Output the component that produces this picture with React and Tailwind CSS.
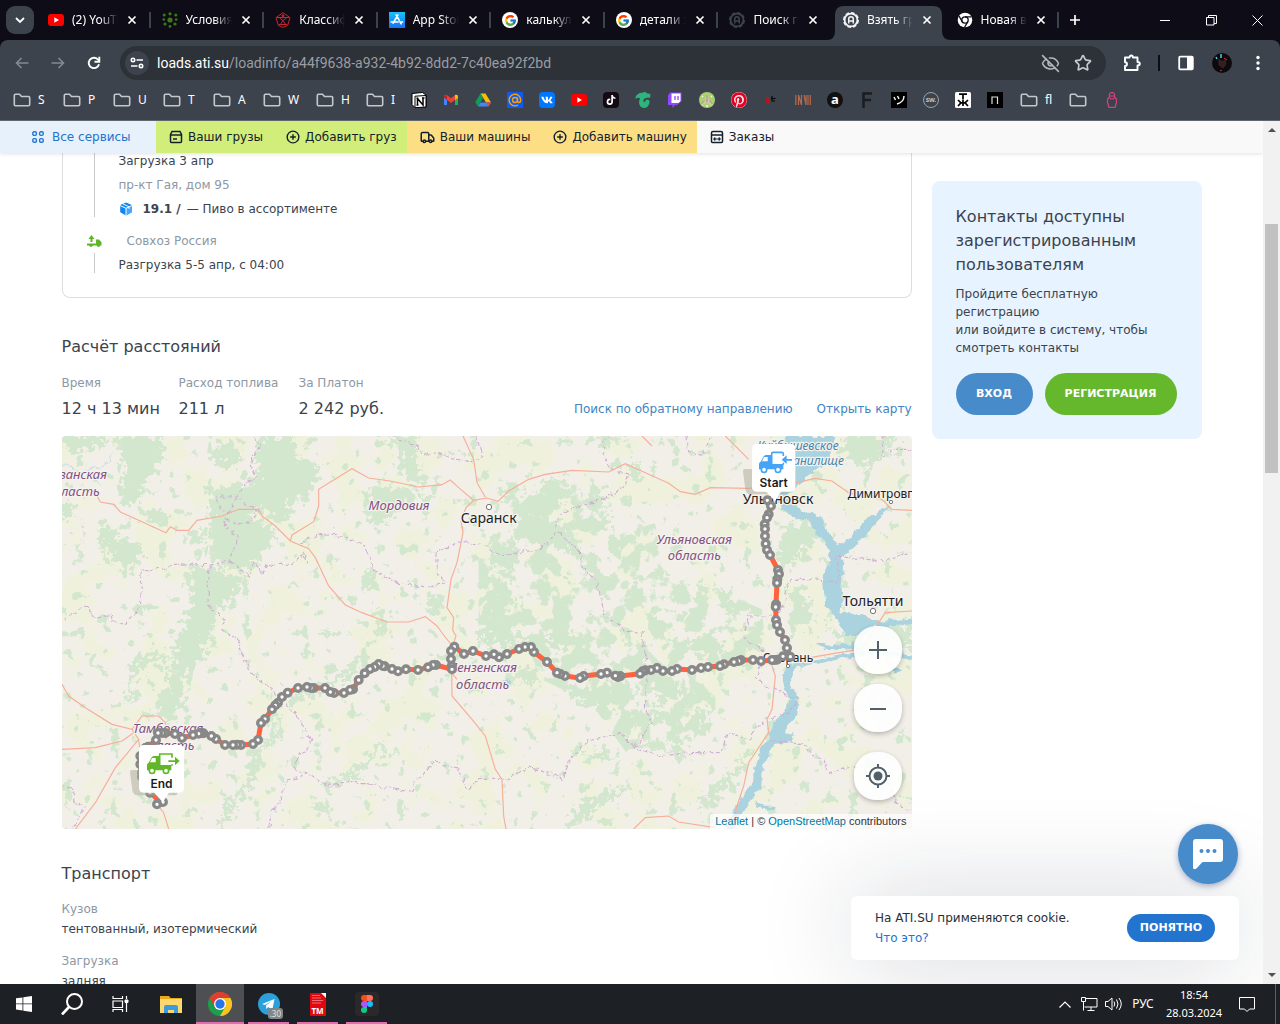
import React from "react";
import { FcGoogle } from "react-icons/fc";
import { FaTiktok, FaVk, FaPinterest } from "react-icons/fa";
import { Star, EyeOff, Truck, CirclePlus } from "lucide-react";

/* ---------- browser icons ---------- */
const YouTube = () => (
  <svg width="16" height="16" viewBox="0 0 16 16"><rect y="2" width="16" height="12" rx="3" fill="#f00" /><path d="M6.3 5.3v5.4L11 8z" fill="#fff" /></svg>
);
const Dots = () => (
  <svg width="16" height="16" viewBox="0 0 16 16" fill="#3d7a16">
    <circle cx="8" cy="8" r="2.6" /><circle cx="8" cy="1.8" r="1.6" /><circle cx="8" cy="14.4" r="1.4" />
    <circle cx="2.2" cy="3" r="1.5" /><circle cx="13.8" cy="3" r="1.5" /><circle cx="1.8" cy="7.5" r="1.3" />
    <circle cx="14.2" cy="7.5" r="1.3" /><circle cx="3" cy="12" r="1.6" /><circle cx="13" cy="12" r="1.6" />
  </svg>
);
const RedSeal = () => (
  <svg width="16" height="16" viewBox="0 0 16 16" fill="none" stroke="#c3282d" strokeWidth="1"><path d="M8 .7 15 5.6l-2.3 7.8L8 15.4l-4.7-2L1 5.6zM2 5.500h12M4 12.500h8M5.500 12.500 8 8.500l2.500 4M4.500 6 8 8.500 11.500 6" /><circle cx="8" cy="3.800" r="1" fill="#c3282d" /></svg>
);
const AppStore = () => (
  <span className="flex size-4 items-center justify-center bg-linear-to-b from-[#1fc1fb] to-[#1d6ff2] text-white">
    <svg width="14" height="14" viewBox="0 0 14 14" stroke="#fff" strokeWidth="1.6" strokeLinecap="round"><path d="M7.8 2 3.2 10.2M6.2 2l3 5.2M10 8.8l1.2 2M1.2 9h7M11 9h1.6" /></svg>
  </span>
);
const GoogleDisc = () => <span className="flex size-4 items-center justify-center rounded-full bg-white"><FcGoogle size={13} /></span>;
const AtiLogo = ({ color }) => (
  <svg width="16" height="16" viewBox="0 0 16 16" fill="none" stroke={color}>
    <circle cx="8" cy="8" r="6.400" strokeWidth="1.800" /><circle cx="8" cy="8" r="7.300" strokeWidth="1.400" strokeDasharray="3.700 2" />
    <path d="M5.700 11.500V7a2.300 2.300 0 0 1 4.600 0v4.500M5.700 9h4.600" strokeWidth="1.500" />
  </svg>
);
const ChromeMono = () => (
  <svg width="16" height="16" viewBox="0 0 16 16"><circle cx="8" cy="8" r="7.3" fill="#fff" /><circle cx="8" cy="8" r="3.2" fill="#fff" stroke="#0d0c17" strokeWidth="1.3" /><path d="M8 4.8h6.5M5.2 9.6 2 4M10.8 9.6 7.6 15.2" stroke="#0d0c17" strokeWidth="1.3" /></svg>
);
const Close = () => <svg width="10" height="10" viewBox="0 0 10 10" stroke="#fff" strokeWidth="1.7"><path d="m1.5 1.5 7 7m0-7-7 7" /></svg>;
const Folder = () => (
  <svg width="18" height="14" viewBox="0 0 18 14" fill="none" stroke="#c6c7ca" strokeWidth="1.6" strokeLinejoin="round"><path d="M1.3 11.5v-9q0-1.2 1.2-1.2h4l2 2.2h7q1.2 0 1.2 1.2v6.8q0 1.2-1.2 1.2h-13q-1.2 0-1.2-1.2z" /></svg>
);

const tabs = [
  { t: "(2) YouTube", i: <YouTube /> },
  { t: "Условия", i: <Dots /> },
  { t: "Классификатор", i: <RedSeal /> },
  { t: "App Store", i: <AppStore /> },
  { t: "калькулятор", i: <GoogleDisc /> },
  { t: "детали заказа", i: <GoogleDisc /> },
  { t: "Поиск грузов", i: <AtiLogo color="#3c444c" /> },
  { t: "Взять груз", i: <AtiLogo color="#f2f3f4" />, active: true },
  { t: "Новая вкладка", i: <ChromeMono /> },
];

function TabStrip() {
  return (
    <div className="flex h-10 bg-[#0d0c17]">
      <div className="w-[37px] shrink-0 pt-[6px] pl-[6px]">
        <button aria-label="Поиск вкладок" className="flex size-7 items-center justify-center rounded-[9px] bg-[#3d434d]">
          <svg width="10" height="7" viewBox="0 0 10 7" fill="none" stroke="#fff" strokeWidth="1.8"><path d="m1 1 4 4 4-4" /></svg>
        </button>
      </div>
      <div className="flex min-w-0 flex-1">
        {tabs.map((tab, n) => (
          <div key={n} className="relative min-w-0 flex-1 pt-[6px] pl-[3px]">
            {tab.active && (
              <svg className="absolute -left-[5px] top-[6px]" width="124" height="34" viewBox="0 0 124 34" fill="#3d434d"><path d="M0 34q8 0 8-9V9q0-9 9-9h89q9 0 9 9v16q0 9 9 9z" /></svg>
            )}
            <div className="relative flex h-7 items-center pl-2">
              {tab.i}
              <span className="ml-2 w-[46px] overflow-hidden text-[12px] whitespace-nowrap text-white [mask-image:linear-gradient(to_right,black_60%,transparent)]">{tab.t}</span>
              <button aria-label="Закрыть вкладку" className="ml-[9px]"><Close /></button>
              {n !== 6 && n !== 7 && <span className="absolute right-0 h-4 w-[2px] bg-[#3d434d]" />}
            </div>
          </div>
        ))}
      </div>
      <button aria-label="Новая вкладка" className="flex w-8 items-center justify-center">
        <svg width="12" height="12" viewBox="0 0 12 12" stroke="#fff" strokeWidth="1.7"><path d="M6 1v10M1 6h10" /></svg>
      </button>
      <div className="w-[51px]" />
      <button aria-label="Свернуть" className="flex w-[46px] items-center justify-center"><svg width="10" height="10" stroke="#fff"><path d="M0 5.5h10" /></svg></button>
      <button aria-label="Развернуть" className="flex w-[46px] items-center justify-center"><svg width="11" height="11" fill="none" stroke="#fff"><path d="M.5 2.5h7.500v7.500H.5zM2.500 2.500V.5h8v8H8" /></svg></button>
      <button aria-label="Закрыть" className="flex w-[46px] items-center justify-center"><svg width="11" height="11" stroke="#fff"><path d="m.5.5 10 10m0-10-10 10" /></svg></button>
    </div>
  );
}

const navBtn = "flex w-9 items-center justify-center";
function Toolbar() {
  return (
    <div className="bg-[#0d0c17]">
      <div className="flex h-[46px] items-center rounded-t-lg bg-[#3d434d] pl-1">
        <button aria-label="Назад" className={navBtn}><svg width="14" height="12" viewBox="0 0 14 12" fill="none" stroke="#858991" strokeWidth="1.6"><path d="M13.500 6H1.500M6.500 1l-5 5 5 5" /></svg></button>
        <button aria-label="Вперёд" className={navBtn}><svg width="14" height="12" viewBox="0 0 14 12" fill="none" stroke="#858991" strokeWidth="1.6"><path d="M.5 6h12M7.500 1l5 5-5 5" /></svg></button>
        <button aria-label="Обновить" className={navBtn}><svg width="14" height="14" viewBox="0 0 14 14" fill="none" stroke="#fff" strokeWidth="1.9"><path d="M12 8.200A5.200 5.200 0 1 1 10.800 3.400L12.500 5" /><path d="M12.300.8v5H7.500" /></svg></button>
        <div className="ml-2 flex h-[34px] min-w-0 flex-1 items-center rounded-full bg-[#2d3138] pr-[14px] pl-[5px]">
          <span className="flex size-6 shrink-0 items-center justify-center rounded-full bg-[#3d434d]">
            <svg width="14" height="12" viewBox="0 0 14 12" fill="none" stroke="#fff" strokeWidth="1.6"><circle cx="3" cy="3" r="1.700" /><path d="M6.500 3H13M1 9h6.500" /><circle cx="11" cy="9" r="1.700" /></svg>
          </span>
          <div className="relative ml-2 flex-1 font-['Roboto'] text-[14px] text-[#9a9da3]">
            <input aria-label="Адрес" className="absolute inset-0 w-full bg-transparent text-transparent outline-none" />
            <span className="text-white">loads.ati.su</span>/loadinfo/a44f9638-a932-4b92-8dd2-7c40ea92f2bd
          </div>
          <button aria-label="Файлы cookie"><EyeOff size={19} color="#b5b7ba" strokeWidth={2} /></button>
          <button aria-label="В закладки" className="ml-[14px]"><Star size={18} color="#c9cacc" strokeWidth={2.200} /></button>
        </div>
        <button aria-label="Расширения" className="ml-[17px]"><svg width="18" height="18" viewBox="0 0 18 18" fill="none" stroke="#fff" strokeWidth="1.900" strokeLinejoin="round"><path d="M2 3.500h4.500q0-2 1.700-2t1.700 2h4.600V8q2.300 0 2.300 1.700t-2.300 1.700V16H2v-4q2 0 2-1.900T2 8.200z" /></svg></button>
        <span className="ml-[17px] h-4 w-[2px] bg-[#0d0c17]" />
        <button aria-label="Боковая панель" className="ml-[18px]"><svg width="16" height="16" viewBox="0 0 16 16"><rect x="1.200" y="1.700" width="13.600" height="12.600" rx="1" fill="none" stroke="#fff" strokeWidth="1.800" /><path d="M9 2h5.500v12H9z" fill="#fff" /></svg></button>
        <button aria-label="Профиль" className="ml-[18px]"><svg width="20" height="20" viewBox="0 0 20 20"><circle cx="10" cy="10" r="10" fill="#0c0a0c" /><path d="m7 6 3 3 3-2 1 4-3 4-4-3z" fill="#2b2226" stroke="#4a1d23" /><path d="m4 4 1 2M9 1v4" stroke="#51c8ec" strokeWidth="1.500" /><path d="m12 5 3 2M8 18l2-1" stroke="#c3343b" /></svg></button>
        <button aria-label="Меню" className="mr-[15px] ml-[19px] w-[14px]"><svg className="mx-auto" width="4" height="16" fill="#fff"><circle cx="2" cy="2.500" r="1.700" /><circle cx="2" cy="8" r="1.700" /><circle cx="2" cy="13.500" r="1.700" /></svg></button>
      </div>
    </div>
  );
}

const marks = [
  <svg width="16" height="16" viewBox="0 0 16 16"><path d="M1 1.500 11.500.5 15 3v12l-11 .7L1 12.500z" fill="#fff" stroke="#000" /><path d="M4 4.200 15 3.500v11.500l-11 .7z" fill="#fff" stroke="#000" /><path d="M6.500 13V6.500L12 13V6M5.500 6.500h2M5.500 13h2M11 6h2.500" stroke="#000" strokeWidth="1.500" fill="none" /></svg>,
  <svg width="16" height="16" viewBox="0 0 16 16"><path d="M1 3.500V13h3V7.500" fill="#4285f4" /><path d="M15 3.500V13h-3V7.500" fill="#34a853" /><path d="M1 4.500V4q1-2 3-1l4 3.300L12 3q2-1 3 1v1.500L8 11 1 5.500z" fill="#ea4335" /><path d="M12 3q3-1 3 2v1l-3 2z" fill="#fbbc04" /><path d="M4 8v0L1 5.500V4l3-1z" fill="#c5221f" /></svg>,
  <svg width="16" height="16" viewBox="0 0 16 16"><path d="M5.500 1.500h5L16 10.500h-5z" fill="#fbbc04" /><path d="M5.500 1.500 8 6 3 14.500.3 10.300z" fill="#0f9d58" /><path d="M5.500 10.500H16l-2.500 4H3z" fill="#4285f4" /><path d="M11 10.500h5l-2.500 4z" fill="#ea4335" /></svg>,
  <svg width="16" height="16" viewBox="0 0 16 16"><rect width="16" height="16" rx="1" fill="#0a5cf5" /><path d="M11 13a5.800 5.800 0 1 1 2.700-5q0 2.500-1.700 2.500T10.500 8V5.500" fill="none" stroke="#ff9e00" strokeWidth="1.400" /><circle cx="8" cy="8" r="2.500" fill="none" stroke="#ff9e00" strokeWidth="1.400" /></svg>,
  <span className="flex size-4 items-center justify-center rounded-[4px] bg-[#07f] text-white"><FaVk size={12} /></span>,
  <YouTube />,
  <span className="flex size-4 items-center justify-center rounded-[4px] bg-[#150a14] text-white"><FaTiktok size={10} /></span>,
  <svg width="16" height="16" viewBox="0 0 16 16" fill="#2cb67d"><path d="M4 1.500Q5 .5 7 1q3-2 5 .5 2-.5 3.500 1L15 6q-2-1-4 0-3 .5-2.500 3 .5 2 1.500 1 0-2 2-2.500 3 0 2.500 3.500Q13 16 9 16q-5-.5-5-6l1-4Q2 5 .5 7 0 3.500 4 1.500z" /></svg>,
  <svg width="16" height="16" viewBox="0 0 16 16"><path d="M3 .5h11.500v9L10 13H8l-2.500 3V13H1V3.500z" fill="#9146ff" /><path d="M4.500 1.500h9V9l-2 2h-7z" fill="#fff" /><path d="M8 4v4m3-4v4" stroke="#9146ff" strokeWidth="1.300" /></svg>,
  <svg width="16" height="16" viewBox="0 0 16 16"><circle cx="8" cy="8" r="8" fill="#a9d06f" /><path d="m1.500 12 4-4L7 3q1-1.500 2 0l1.500 5 4 4-2 2.500L8 10l-4.500 4.500z" fill="#d3c6a6" /><path d="M8 3v7M5.500 8.500 2.500 12M10.500 8.500l3 3.500" stroke="#8d8868" strokeWidth=".8" /><path d="m3 4 1 1M12 4l1 1M8 13v2" stroke="#f6fae8" strokeWidth="1.500" /></svg>,
  <span className="flex size-4 items-center justify-center rounded-full bg-[#f8e6e8] text-[#e60023]"><FaPinterest size={16} /></span>,
  <svg width="16" height="16" viewBox="0 0 16 16" fill="none"><path d="M6 5.500H3v3h3V5.500V11H3" stroke="#d10d12" strokeWidth="1.200" /><path d="M9 4v5h3M8 6.500h4.500" stroke="#050505" strokeWidth="1.200" /></svg>,
  <svg width="16" height="16" viewBox="0 0 16 16" fill="none" stroke="#b8694b" strokeWidth="1.200"><path d="M.8 3v10M3.500 13V3l3 10V3M9 3l2 10V3M13 3v10M15.300 3v10" /></svg>,
  <span className="flex size-4 items-center justify-center rounded-full bg-[#111] pb-[2px] text-[13px] leading-none font-bold text-white">a</span>,
  <svg width="16" height="16" viewBox="0 0 16 16" stroke="#1b1c20" strokeWidth="2.500" fill="none"><path d="M4.500 16V1.500H13M4.500 8H12" /></svg>,
  <svg width="16" height="16" viewBox="0 0 16 16"><path d="M0 0h16v16H0z" /><path d="m3 5 1.500 3M6.500 4 8 7M13 4q0 6-7 8" stroke="#fff" strokeWidth="1.400" fill="none" /></svg>,
  <span className="flex size-4 items-center justify-center rounded-full border border-[#9ba1ab] text-[6px] font-bold text-[#c7cbd1]">SW.</span>,
  <svg width="16" height="16" viewBox="0 0 16 16"><rect width="16" height="16" rx="1.500" fill="#fff" /><path d="M4 2.200h8M8 2v5M8 7.500v6.500M3 8l3 2.800L3 14M13 8l-3 2.800 3 3.200M5.500 10.800h5" stroke="#000" strokeWidth="1.700" fill="none" /></svg>,
  <svg width="16" height="16" viewBox="0 0 16 16"><path d="M0 0h16v16H0z" /><path d="M5 12V5h5.500v7" stroke="#ddd" strokeWidth="1.200" fill="none" /></svg>,
];

function Bookmarks() {
  return (
    <div className="flex h-[35px] items-center border-b border-[#60666e] bg-[#3d434d] pb-[6px] pl-[13px] text-[12px] text-white">
      {["S", "P", "U", "T", "A", "W", "H", "I"].map((l) => (
        <button key={l} className={l === "W" ? "flex w-[53px] items-center gap-[7px]" : l === "I" ? "flex w-[45px] items-center gap-[7px]" : "flex w-[50px] items-center gap-[7px]"}><Folder />{l}</button>
      ))}
      <div className="flex gap-4">
        {marks.map((m, i) => <button key={i} aria-label={"Закладка " + (i + 1)}>{m}</button>)}
      </div>
      <button className="ml-[17px] flex w-[49px] items-center gap-[7px]"><Folder />fl</button>
      <button aria-label="Папка"><Folder /></button>
      <button aria-label="Матрёшка" className="ml-[17px]"><svg width="16" height="16" viewBox="0 0 16 16" fill="none" stroke="#d3417c" strokeWidth="1.200"><path d="M5.500 5q-.8-4.300 2.500-4.300T10.500 5q2.500 1.500 2 5.500L11 15.300H5L3.500 10.500Q3 6.500 5.500 5zM5.500 4h5M5.500 6q2.500 2 5 0" /></svg></button>
    </div>
  );
}

/* ---------- site header ---------- */
const BoxIcon = () => <svg width="14" height="14" viewBox="0 0 14 14" fill="none" stroke="#14202b" strokeWidth="1.500"><path d="M1.500 4.500 3 1.500h8l1.500 3v7q0 1-1 1h-9q-1 0-1-1zM1.500 5h11M4 9h4" /></svg>;
const OrdersIcon = () => <svg width="14" height="14" viewBox="0 0 14 14" fill="none" stroke="#14202b" strokeWidth="1.500"><path d="M1.500 5V3q0-1.500 1.500-1.500h8q1.500 0 1.500 1.500v8.500q0 1-1 1h-9q-1 0-1-1V5h11" /><path d="M4 9h6M5.300 7.500 3.800 9l1.500 1.500M8.700 7.500 10.200 9l-1.500 1.500" strokeWidth="1.100" /></svg>;
const navLink = "flex items-center gap-[5px] pl-[13px] pr-[10px]";

function SiteNav() {
  return (
    <nav className="relative z-10 flex h-8 bg-[#f9f9f9] text-[12px] text-[#14202b] shadow-[0_1px_4px_rgba(0,0,0,0.12)]">
      <a href="#services" className="flex w-[156px] items-center gap-2 bg-[#e7f1fb] pl-8 text-[#2274cf]">
        <svg width="12" height="12" viewBox="0 0 12 12" fill="none" stroke="#2274cf" strokeWidth="1.400"><rect x=".8" y=".8" width="3.600" height="3.600" rx="1.300" /><rect x="7.600" y=".8" width="3.600" height="3.600" rx="1.300" /><rect x=".8" y="7.600" width="3.600" height="3.600" rx="1.300" /><rect x="7.600" y="7.600" width="3.600" height="3.600" rx="1.300" /></svg>
        Все сервисы
      </a>
      <div className="flex bg-[#d2ee7a]">
        <a href="#loads" className={navLink}><BoxIcon />Ваши грузы</a>
        <a href="#add-load" className={navLink}><CirclePlus size={14} strokeWidth={2.400} />Добавить груз</a>
      </div>
      <div className="flex bg-[#fcdf85]">
        <a href="#trucks" className={navLink}><Truck size={15} strokeWidth={2.400} />Ваши машины</a>
        <a href="#add-truck" className={navLink}><CirclePlus size={14} strokeWidth={2.400} />Добавить машину</a>
      </div>
      <a href="#orders" className={navLink}><OrdersIcon />Заказы</a>
    </nav>
  );
}

/* ---------- map: 3 drawing units per pixel ---------- */
const forests = [
  "0,0 150,0 130,25 60,45 0,35", "165,0 310,0 300,60 275,110 245,140 235,200 200,205 170,170 185,110 175,60", "470,15 530,30 530,70 510,100 470,90 450,60",
  "600,0 700,0 700,60 760,70 765,110 730,185 690,180 685,240 650,260 610,240 570,190 585,120 580,50", "440,180 480,150 560,140 590,120 600,180 560,240 600,260 640,280 630,320 590,370 560,400 500,395 450,370 440,310 450,240",
  "0,205 40,210 30,240 0,260", "240,240 290,215 320,235 310,270 260,265", "120,270 160,275 180,310 240,330 235,365 200,400 150,360 115,300", "380,290 430,280 430,320 400,330",
  "385,395 450,390 540,430 530,470 490,500 460,540 450,600 380,600 385,520 390,450", "985,0 1070,0 1065,90 1100,130 1080,145 1020,120 1010,50", "910,160 960,150 1050,160 1060,190 1000,230 960,270 920,260 910,200", "1080,170 1120,180 1110,205 1080,205",
  "900,420 940,390 950,430 920,470 890,450", "1090,490 1150,480 1130,540 1100,530", "1260,540 1290,520 1290,600 1250,600", "940,520 970,510 970,570 950,600",
  "350,582 430,582 425,660 395,690 370,720 365,790 330,860 290,850 290,790 320,740 335,660", "200,690 240,655 300,650 330,665 240,690 215,740 215,800 200,800", "560,930 580,930 590,1000 560,1060 510,1120 480,1179 470,1160 500,1100 560,1020",
  "640,800 660,840 640,920 570,950 640,890", "780,1040 860,1010 960,920 970,940 900,1010 800,1050", "760,1100 800,1085 800,1120 770,1130", "780,582 820,582 815,605 790,605", "940,582 980,582 970,605 950,605", "670,780 720,770 860,700 900,650 920,660 880,710 780,770 690,800",
  "1315,155 1370,130 1380,165 1350,185 1320,180", "1440,130 1490,125 1520,170 1510,200 1460,200 1420,170", "1560,190 1600,170 1640,210 1580,220", "1610,0 1680,0 1670,25 1630,30", "1700,80 1730,80 1740,140 1710,130",
  "1380,220 1440,230 1490,270 1540,300 1550,350 1500,340 1450,330 1400,320 1360,260", "1290,330 1360,310 1380,370 1340,400 1290,390", "1600,250 1640,235 1650,275 1610,285",
  "1300,430 1330,440 1350,500 1320,560 1270,570 1270,500", "1950,430 1980,460 2030,520 2000,540", "2160,270 2250,260 2290,310 2230,330 2180,400 2150,360",
  "2340,0 2500,0 2470,60 2400,90 2350,60", "2180,440 2220,470 2260,540 2250,582 2190,560", "2290,560 2340,590 2440,600 2440,582 2550,560 2550,640 2350,640", "1260,590 1420,600 1550,600 1550,630 1480,640 1360,620 1270,640",
  "1500,740 1560,760 1700,730 1720,790 1660,820 1590,810 1540,790", "1760,760 1800,730 1870,740 1850,790 1790,790", "1880,820 1920,820 1930,890 1900,910 1870,880", "1760,820 1810,830 1820,860 1770,870", "1560,950 1640,940 1660,970 1600,970",
  "1820,930 1860,920 1880,960 1830,970", "1520,1140 1580,1090 1700,1045 1700,1060 1600,1120 1560,1160", "1910,1100 1950,1060 2040,970 2050,990 1980,1070 1930,1130", "1860,610 1960,600 1990,640 1900,660", "1350,710 1420,690 1430,730 1370,740",
];
const thickets = "1250,380 1330,220 1440,120 1560,150 1660,300 1780,260 1800,420 1960,460 2100,520 2110,640 1960,700 1960,820 1850,930 1700,960 1600,820 1500,760 1250,640";
const trunkRoads = [
  "105,180 115,198 155,205 175,228 235,255 312,290 325,272 345,283 380,283 405,253 480,240 530,220 590,220 600,240 640,270 685,315 740,338 760,365 800,450 850,507 900,530 975,558 1040,558 1090,542 1125,570 1147,600 1180,640",
  "685,315 690,297 755,257 770,210 770,160 870,98 920,126 985,135 1070,153 1140,146 1165,132 1190,155 1235,193 1275,186 1308,196 1340,165 1400,130 1450,115 1530,103 1640,108 1690,83 1760,115 1820,142 1855,167 1900,175 1945,155 2060,157 2190,143 2260,127 2310,135 2360,170 2400,180 2460,190 2490,220 2550,223",
  "1203,0 1235,70 1245,140 1270,184", "1235,193 1212,215 1197,255 1203,290 1185,380 1167,430 1155,515 1175,545 1172,582 1182,600 1168,640 1170,780 1230,850 1270,900 1300,1000 1320,1030 1325,1140 1332,1179",
  "1990,0 2060,70", "1740,0 1770,30", "0,745 20,780 70,815 150,865 210,880 240,840 290,840 310,860 312,910", "0,940 100,935 180,915 230,880", "230,910 160,995 100,1100 40,1179", "210,880 230,910 240,1000 285,1105 305,1130 320,1179",
  "2127,680 2140,720 2130,820 2115,850 2120,890 2060,980 2045,1050 2025,1110 2010,1179", "2245,665 2330,650 2400,640 2450,560 2470,530 2550,525", "1715,1179 1750,1145 1820,1140 1850,1158 1960,1175", "1160,700 1185,730",
];
const borders = [
  "578,0 595,30 570,60 565,90 583,125 555,140 525,180 460,180 475,225 500,230 520,185 590,225 560,265 490,250 490,270 533,305 510,350 505,375 445,385 340,388 300,400 240,405 235,515 185,565 150,555 145,535 95,545 70,507 5,550",
  "445,385 435,440 445,520 490,550 480,582 525,610 560,700 640,770 700,830 750,910 735,945 705,960 700,1000 735,1010 800,1050 860,1040 920,1040 1000,1060 1050,1070 1065,1035 1120,975 1190,1000 1215,1060 1254,1030 1330,1030 1400,990 1500,1030 1530,960 1580,915 1670,890 1720,935 1790,960 1880,950 1975,950 2000,890 2060,910 2110,850 2180,830 2210,790 2150,770 2080,730 2110,650 2040,600",
  "505,375 560,420 575,380 600,415 620,385 690,385 725,350 735,385 M715,320 770,295 830,300 910,325 935,400 990,435 1090,455 1150,440 1125,400 1125,350 1190,318 1260,325 1315,360 1430,340 1480,300 1490,240 1560,205 1620,195 1690,150 1700,115 1640,95 1620,30 1640,0",
  "1490,290 1550,340 1560,390 1600,430 1630,540 1690,582 1740,590 1755,700 1750,820 1770,860 1720,930", "985,0 1060,30 1085,55 1130,50 1170,65 1230,80 1265,60 1240,0", "1875,0 1880,50 1920,60 1950,0", "2050,582 2060,540 2150,540 2185,430 2220,430 2330,437 2325,360 2410,370 2470,375 2550,350",
  "0,1050 30,1060 40,1100 70,1110 30,1179", "620,1179 630,1120 655,1100 670,1040 740,1010", "2130,910 2240,930 2250,960 2285,970 2300,1010 2380,990 2420,990 2480,1040 2500,1100 2540,1120", "2470,0 2460,60 2500,40 2550,40",
];
const stops = [[2116,193],[2127,210],[2120,235],[2115,245],[2108,265],[2109,279],[2109,300],[2111,323],[2115,342],[2124,357],[2148,402],[2151,414],[2146,430],[2145,441],[2142,505],[2141,513],[2142,552],[2145,567],[2154,588],[2169,612],[2175,636],[2185,662],[2163,661],[2145,671],[2137,672],[2130,672],[2097,675],[2073,672],[2037,672],[2030,675],[2016,678],[1986,685],[1974,690],[1938,693],[1917,696],[1890,702],[1845,699],[1830,705],[1803,705],[1785,696],[1767,702],[1750,703],[1742,706],[1734,713],[1675,720],[1668,723],[1660,719],[1635,710],[1617,714],[1565,720],[1554,726],[1509,720],[1495,714],[1485,710],[1455,678],[1416,648],[1407,633],[1389,633],[1371,639],[1335,654],[1311,664],[1296,655],[1272,660],[1233,645],[1206,654],[1177,632],[1167,645],[1167,669],[1169,690],[1170,700],[1122,687],[1113,687],[1098,694],[1068,702],[1032,700],[1008,706],[990,699],[968,691],[963,690],[950,684],[938,693],[924,699],[908,712],[890,732],[873,760],[864,762],[846,771],[816,771],[805,768],[789,756],[755,756],[747,756],[735,753],[708,756],[677,770],[660,783],[648,800],[640,808],[630,820],[609,849],[597,861],[588,912],[573,924],[537,927],[525,926],[513,927],[489,927],[462,909],[448,900],[424,892],[418,890],[410,893],[393,897],[360,906],[339,894],[310,891],[300,891],[288,891],[282,912],[258,932],[250,936],[235,960],[235,985],[240,1010],[240,1022],[264,1070],[297,1098],[303,1098],[285,1105]];

function Pin({ x, y, w, color, label, out }) {
  return (
    <g transform={`translate(${x} ${y})`}>
      <path d={`M-27 81q0-6 6-6H${w - 20}V143q0 8-8 8H-5q-12 0-15-15z`} fill="#a9a994" opacity=".5" />
      <path d={`M14 0H${w - 14}q14 0 14 14v115q0 14-14 14H${w / 2 + 22}L${w / 2 + 4} 172 ${w / 2 - 22} 143H14Q0 143 0 129V14Q0 0 14 0z`} fill="#fff" />
      <g transform={out ? "translate(3 0)" : ""} fill={color}>
        <path d="M21 76V60q0-5 5-7l8-15q3-5 8-5h17v27h35v16z" />
        <path d="M36 39h11v13H30z" fill="#fff" />
        <path d={out ? "M59 60V27H96V38M96 58v4" : "M59 60V29q0-4 4-4h26q5 0 5 5v6M94 56v6"} fill="none" stroke={color} strokeWidth="5" />
        <circle cx="36" cy="77" r="8" fill="#fff" stroke={color} strokeWidth="5" /><circle cx="78" cy="77" r="8" fill="#fff" stroke={color} strokeWidth="5" />
        {out ? <path d="M85 46h20V35l14 13-14 13V51H85z" /> : <path d="M120 45h-16V34L89 47l15 13V50h16z" />}
      </g>
      <text x={w / 2} y="128" textAnchor="middle" fontSize="36" className="font-['Inter'] font-semibold" fill="#1c1c1c">{label}</text>
    </g>
  );
}

const region = "font-['Noto_Sans'] italic";
const halo = { stroke: "#f5f3ee", strokeWidth: 7, paintOrder: "stroke", strokeLinejoin: "round" };
const whole = { x: 0, y: 0, width: 2550, height: 1179, filterUnits: "userSpaceOnUse", colorInterpolationFilters: "sRGB" };

function RouteMap() {
  return (
    <div className="relative mt-[15px] h-[393px] overflow-hidden rounded-[4px] bg-[#f2efe9]">
      <svg className="h-full w-full" viewBox="0 0 2550 1179" preserveAspectRatio="xMidYMid slice" role="img" aria-label="Карта маршрута">
        <defs>
          <filter id="rag" {...whole}>
            <feTurbulence type="fractalNoise" baseFrequency="0.05" numOctaves="4" seed="4" result="n" />
            <feDisplacementMap in="SourceGraphic" in2="n" scale="80" xChannelSelector="R" yChannelSelector="G" />
          </filter>
          <filter id="thicket" {...whole}>
            <feTurbulence type="fractalNoise" baseFrequency="0.017" numOctaves="5" seed="9" />
            <feColorMatrix values="0 0 0 0 .827  0 0 0 0 .906  0 0 0 0 .808  20 0 0 0 -10" />
            <feComposite in2="SourceGraphic" operator="in" />
          </filter>
          <filter id="copse" {...whole}>
            <feTurbulence type="fractalNoise" baseFrequency="0.028" numOctaves="4" seed="33" />
            <feColorMatrix values="0 0 0 0 .827  0 0 0 0 .906  0 0 0 0 .808  20 0 0 0 -13" />
          </filter>
          <filter id="fields" {...whole}>
            <feTurbulence type="fractalNoise" baseFrequency="0.009" numOctaves="6" seed="21" />
            <feColorMatrix values="0 0 0 0 .941  0 0 0 0 .945  0 0 0 0 .866  10 0 0 0 -5" />
          </filter>
          <filter id="shore" {...whole}>
            <feTurbulence type="fractalNoise" baseFrequency="0.04" numOctaves="3" seed="2" result="n" />
            <feDisplacementMap in="SourceGraphic" in2="n" scale="22" xChannelSelector="R" yChannelSelector="G" />
          </filter>
        </defs>
        <rect width="2550" height="1179" filter="url(#fields)" />
        <rect width="2550" height="1179" filter="url(#copse)" />
        <polygon points={thickets} filter="url(#thicket)" />
        <g fill="#d3e7ce" filter="url(#rag)">{forests.map((p) => <polygon key={p} points={p} />)}</g>
        <g fill="#aad3df" stroke="#aad3df" filter="url(#shore)" strokeLinejoin="round">
          <path stroke="none" d="M2170 0H2320L2300 70 2250 110 2200 160 2140 200 2150 110z" />
          <path stroke="none" d="M2140 190 2180 190 2230 230 2275 240 2300 290 2325 328 2360 310 2410 250 2480 208 2450 255 2385 325 2345 365 2340 420 2345 500 2330 530 2390 530 2440 555 2550 548V565L2440 575 2400 600 2350 600 2320 540 2290 510 2283 430 2305 370 2300 340 2265 295 2240 255 2190 245 2160 220z" />
          <path fill="none" strokeWidth="12" d="M2550 665 2440 650 2340 660 2260 680 2190 690M2270 622 2300 635 2370 628 2400 645" />
          <path fill="none" strokeWidth="22" d="M2190 690 2172 720 2180 760 2200 790" />
          <path fill="none" strokeWidth="38" d="M2200 795 2190 820 2160 860 2140 905" />
          <path fill="none" strokeWidth="26" d="M2140 900 2105 950 2090 990 2085 1050 2050 1090 2020 1140 2000 1179M2140 910 2190 905" />
          <path fill="none" strokeWidth="12" d="M2080 1105 2140 1120M2490 690 2510 710M1320 740 1350 735" />
          <path fill="none" strokeWidth="2" d="M0 85 60 110 140 80 152 50M60 110 110 140" />
        </g>
        <g fill="none" stroke="#f8ae98" strokeWidth="3.500">{trunkRoads.map((p) => <polyline key={p} points={p} />)}</g>
        <g fill="none" stroke="#d0aed4" strokeWidth="3.500" strokeDasharray="13 7" filter="url(#shore)">{borders.map((p) => <path key={p} d={"M" + p} />)}</g>
        <g fill="#815183" fontSize="39" className={region} textAnchor="middle" {...halo}>
          <text x="64" y="130">занская</text><text x="55" y="180">ласть</text>
          <text x="1011" y="221">Мордовия</text>
          <text x="1897" y="323">Ульяновская</text><text x="1897" y="373">область</text>
          <text x="1262" y="708">Пензенская</text><text x="1262" y="758">область</text>
          <text x="318" y="892">Тамбовская</text><text x="318" y="942">область</text>
        </g>
        <g fill="#4a84ae" fontSize="36" className={region} textAnchor="middle" {...halo}>
          <text x="2208" y="43">Куйбышевское</text><text x="2212" y="87">водохранилище</text>
        </g>
        <g fill="#222" className="font-['Noto_Sans']" textAnchor="middle" {...halo}>
          <text x="1280" y="262" fontSize="42">Саранск</text>
          <text x="2148" y="204" fontSize="42">Ульяновск</text>
          <text x="2357" y="187" fontSize="36" textAnchor="start">Димитровград</text>
          <text x="2433" y="510" fontSize="42">Тольятти</text>
          <text x="2178" y="677" fontSize="36">Сызрань</text>
        </g>
        <g fill="#fff" stroke="#777" strokeWidth="3"><circle cx="1281" cy="213" r="8" /><circle cx="2433" cy="525" r="8" /><circle cx="2487" cy="198" r="5" /><circle cx="2178" cy="690" r="5" /></g>
        <polyline points={stops.map((s) => s.join()).join(" ")} fill="none" stroke="#ff6240" strokeWidth="15" strokeLinejoin="round" />
        <g fill="#fff" stroke="#888" strokeWidth="10">{stops.map(([x, y]) => <circle key={x + "-" + y} cx={x} cy={y} r="10" />)}</g>
        <Pin x={2070} y={24} w={130} color="#46a4f8" label="Start" />
        <Pin x={231} y={927} w={135} color="#62b728" label="End" out />
      </svg>
      <div className="absolute top-[190px] right-[10px] flex flex-col">
        <button aria-label="Увеличить" className={mapBtn}><svg width="18" height="18" stroke="#52606b" strokeWidth="2"><path d="M9 0v18M0 9h18" /></svg></button>
        <button aria-label="Уменьшить" className={mapBtn + " mt-[10px]"}><svg width="16" height="18" stroke="#52606b" strokeWidth="2"><path d="M0 10h16" /></svg></button>
        <button aria-label="Моё местоположение" className={mapBtn + " mt-5"}><svg width="24" height="24" viewBox="0 0 24 24" fill="none" stroke="#52606b" strokeWidth="2"><circle cx="12" cy="12" r="8.500" /><circle cx="12" cy="12" r="4.500" fill="#52606b" stroke="none" /><path d="M12 0v4M12 20v4M0 12h4M20 12h4" /></svg></button>
      </div>
      <div className="absolute right-0 bottom-0 bg-white/75 px-[5px] font-['Liberation_Sans'] text-[11px] leading-[15px] text-[#333]">
        <a href="#leaflet" className="text-[#0078a8]">Leaflet</a> | © <a href="#osm" className="text-[#0078a8]">OpenStreetMap</a> contributors
      </div>
    </div>
  );
}
const mapBtn = "flex size-12 items-center justify-center rounded-[22px] bg-white/90 shadow-[0_2px_5px_rgba(0,0,0,0.25)]";

/* ---------- page ---------- */
const Stat = ({ label, value }) => (
  <div className="whitespace-nowrap"><dt className="text-[12px] leading-5 text-[#8c98a4]">{label}</dt><dd className="mt-1 text-[16px] leading-6">{value}</dd></div>
);

function Page() {
  return (
    <main className="mx-auto flex max-w-[1140px] items-start gap-5">
      <div className="min-w-0 flex-1">
        <section className="-mt-1 rounded-b-lg border border-t-0 border-[#dcdde0] pb-6 text-[12px] leading-6">
          <div className="ml-[31px] h-[68px] border-l border-[#c9cbce] pl-6">
            <p>Загрузка 3 апр</p>
            <p className="text-[#8c98a4]">пр-кт Гая, дом 95</p>
            <p className="flex items-center">
              <svg width="14" height="14" viewBox="0 0 14 14"><path d="M7 .5 12.800 3v7.300L7 13.500 1.200 10.300V3z" fill="#0c86f5" /><path d="M7 6.500v7l5.800-3.200V4z" fill="#4aa6fa" /><path d="m1 3.500 6 2.800 6-2.800M7 6.300v7.200M4 2l6 2.800v2" stroke="#fff" fill="none" /></svg>
              <b className="mr-[6px] ml-[10px]">19.1 /</b> — Пиво в ассортименте
            </p>
          </div>
          <div className="mt-3 flex items-center pl-6 text-[#8c98a4]">
            <svg width="15" height="12" viewBox="0 0 15 12" fill="#5fb52a"><path d="M0 8.500h9V4.500h3l2.500 2.500v3.500H0zM3.500 7V4H1.500l3-4 3 4h-2v3z" /><circle cx="4" cy="10.300" r="1.600" /><circle cx="11.500" cy="10.300" r="1.600" /></svg>
            <span className="ml-[25px]">Совхоз Россия</span>
          </div>
          <div className="ml-[31px] h-5 border-l border-[#c9cbce] pl-6"><p>Разгрузка 5-5 апр, с 04:00</p></div>
        </section>
        <section>
          <h2 className="mt-[37px] text-[16px] leading-6">Расчёт расстояний</h2>
          <div className="mt-[14px] flex items-end justify-between">
            <dl className="grid grid-cols-[93px_96px_auto] gap-6">
              <Stat label="Время" value="12 ч 13 мин" />
              <Stat label="Расход топлива" value="211 л" />
              <Stat label="За Платон" value="2 242 руб." />
            </dl>
            <div className="flex gap-6 text-[12px] leading-6 text-[#4284c4]"><a href="#back">Поиск по обратному направлению</a><a href="#map">Открыть карту</a></div>
          </div>
          <RouteMap />
        </section>
        <section className="text-[12px] leading-5">
          <h2 className="mt-[33px] text-[16px] leading-6">Транспорт</h2>
          <dl className="mt-[13px]">
            <dt className="text-[#8c98a4]">Кузов</dt><dd>тентованный, изотермический</dd>
            <dt className="mt-3 text-[#8c98a4]">Загрузка</dt><dd>задняя</dd>
          </dl>
        </section>
      </div>
      <aside className="mt-7 w-[270px] shrink-0 rounded-lg bg-[#e7f3ff] p-6">
        <h2 className="text-[16px] leading-6">Контакты доступны зарегистрированным пользователям</h2>
        <p className="mt-2 text-[12px] leading-[18px]">Пройдите бесплатную<br />регистрацию<br />или войдите в систему, чтобы<br />смотреть контакты</p>
        <div className="mt-4 flex gap-3 text-[11px] font-bold text-white">
          <button className="h-[42px] w-[77px] rounded-full bg-[#478bca]">ВХОД</button>
          <button className="h-[42px] w-[132px] rounded-full bg-[#65b82b]">РЕГИСТРАЦИЯ</button>
        </div>
      </aside>
    </main>
  );
}

function Overlays() {
  return (
    <div className="absolute right-6 bottom-6 flex flex-col items-end">
      <button aria-label="Чат" className="relative z-10 mr-[1px] mb-3 flex size-[60px] items-center justify-center rounded-full bg-[#478bca] shadow-[0_2px_6px_rgba(30,60,120,0.4)]">
        <svg width="30" height="31" viewBox="0 0 30 31"><path d="M3 0h24q3 0 3 3v17q0 3-3 3H9.500l-6 6.500Q0 31.500 0 28V3q0-3 3-3z" fill="#fff" /><g fill="#478bca"><circle cx="8.500" cy="12" r="2" /><circle cx="15" cy="12" r="2" /><circle cx="21.500" cy="12" r="2" /></g></svg>
      </button>
      <div className="flex h-16 w-[388px] items-center justify-between rounded-md bg-white px-6 text-[12px] leading-5 text-[#24303c] shadow-[0_0_100px_rgba(20,30,50,0.2)]">
        <p>На ATI.SU применяются cookie.<br /><a href="#cookie" className="text-[#2274cf]">Что это?</a></p>
        <button className="h-7 w-[88px] rounded-full bg-[#2274cf] text-[11px] font-bold text-white">ПОНЯТНО</button>
      </div>
    </div>
  );
}

function Scrollbar() {
  return (
    <div className="flex w-[17px] shrink-0 flex-col items-center bg-[#f1f1f1]">
      <svg className="mt-[6px]" width="8" height="5" fill="#505050"><path d="M0 5 4 1l4 4z" /></svg>
      <div className="flex-[11]" />
      <div className="w-[13px] flex-[30] bg-[#c1c1c1]" />
      <div className="flex-[60]" />
      <svg className="mb-[6px]" width="8" height="5" fill="#505050"><path d="m0 0 4 4 4-4z" /></svg>
    </div>
  );
}

/* ---------- taskbar ---------- */
const task = "flex w-[49px] items-center justify-center";
const Underline = () => <span className="absolute inset-x-1 bottom-0 h-[2px] bg-[#e26db1]" />;
function Taskbar() {
  return (
    <footer className="flex h-10 shrink-0 bg-[#1d2024] text-[12px] text-white">
      <button aria-label="Пуск" className="flex w-12 items-center justify-center"><svg width="16" height="16" fill="#fff"><path d="M0 2.300 6.500 1.400V7.500H0zM7.300 1.300 16 0v7.500H7.300zM0 8.300h6.500v6.200L0 13.600zM7.300 8.300H16V16l-8.700-1.300z" /></svg></button>
      <button aria-label="Поиск" className="flex w-12 items-center justify-center"><svg width="22" height="22" fill="none" stroke="#fff" strokeWidth="2"><circle cx="13.500" cy="8.500" r="7.500" /><path d="m8 14-7 7.500" strokeWidth="2.600" /></svg></button>
      <button aria-label="Представление задач" className="mr-[2px] flex w-12 items-center justify-center"><svg width="17" height="16" fill="none" stroke="#fff"><path d="M1 0v2.500h9.500V0M1 16v-2.500h9.500V16M1 5h9.500v6.500H1zM14.500 0v3M14.500 7v9" strokeWidth="1.200" /><path d="M13 4h3v2.500h-3z" fill="#fff" /></svg></button>
      <button aria-label="Проводник" className={task}><svg width="22" height="19" viewBox="0 0 22 19"><path d="M0 1h9l1.500 2H22v15H0z" fill="#e9a820" /><path d="M0 4h22v14H0z" fill="#ffd76a" /><path d="M4 18v-6q0-2 2-2h10q2 0 2 2v6h-4v-3H8v3z" fill="#3a9be0" /></svg></button>
      <button aria-label="Chrome" className={task + " relative border-l border-[#1d2024] bg-[#4d4f53]"}>
        <svg width="24" height="24" viewBox="0 0 24 24"><circle cx="12" cy="12" r="12" fill="#1e9e4a" /><path d="M1.600 6A12 12 0 0 1 22.400 6H12l-5.200 9z" fill="#e33b2e" /><path d="M22.400 6A12 12 0 0 1 12 24l5.200-9L12 6z" fill="#fcc31e" /><circle cx="12" cy="12" r="6" fill="#fff" /><circle cx="12" cy="12" r="4.700" fill="#2a74ea" /></svg>
        <span className="absolute inset-x-0 bottom-0 h-[2px] bg-[#e26db1]" />
      </button>
      <button aria-label="Telegram" className={task + " relative"}>
        <svg width="22" height="22" viewBox="0 0 22 22"><circle cx="11" cy="11" r="11" fill="#2ba0da" /><path d="m4 11 12.500-5-2.200 11-4-3-2 2-.3-3.500 6-4.500-7 4z" fill="#fff" /></svg>
        <span className="absolute right-[10px] bottom-[5px] rounded-[3px] bg-[#7f8588] px-[2px] text-[8px] leading-[11px] text-[#e5e5dc]">.30</span>
        <Underline />
      </button>
      <button aria-label="TM" className={task + " relative"}>
        <span className="relative flex h-[23px] w-4 items-end justify-center rounded-[1px] bg-[#e3060f] text-[8px] leading-[10px] font-bold">
          <svg className="absolute inset-0" width="16" height="12"><path d="M11 0h5v5z" fill="#fff" /><path d="M2 2.500h8M2 5h9M2 7.500h11M2 10h9" stroke="#f16a6f" /></svg>TM
        </span>
        <Underline />
      </button>
      <button aria-label="Figma" className={task + " relative"}>
        <span className="flex size-6 items-center justify-center rounded bg-[#2c2829]"><svg width="12" height="18" viewBox="0 0 12 18"><path d="M6 0v6H3a3 3 0 0 1 0-6z" fill="#f24e1e" /><path d="M6 0h3a3 3 0 0 1 0 6H6z" fill="#ff7262" /><path d="M6 6v6H3a3 3 0 0 1 0-6z" fill="#a259ff" /><circle cx="9" cy="9" r="3" fill="#1abcfe" /><path d="M6 12v3a3 3 0 1 1-3-3z" fill="#0acf83" /></svg></span>
        <Underline />
      </button>
      <div className="ml-auto flex items-center">
        <button aria-label="Скрытые значки" className="mr-[10px]"><svg width="12" height="7" fill="none" stroke="#fff"><path d="m.5 6.500 5.500-5.500 5.500 5.500" strokeWidth="1.200" /></svg></button>
        <svg className="mr-[7px]" width="17" height="15" fill="none" stroke="#fff"><path d="M5 1.500h11v8.500H3.500M.5.5h4v4h-4zM2.500 4.500v9M10 10v3M6.500 13.500h7" /></svg>
        <svg className="mr-[10px]" width="17" height="14" fill="none" stroke="#fff"><path d="M.5 4.500h2.500L7 1v12L3 9.500H.5zM9 4.500q1.500 2.500 0 5M11.500 2.500q3 4.500 0 9M14 1q4.500 6 0 12" /></svg>
        <span className="w-[22px] text-center">РУС</span>
        <div className="mx-[10px] w-[60px] text-center text-[11px] leading-[18px]"><div>18:54</div><div>28.03.2024</div></div>
        <button aria-label="Уведомления" className="ml-[5px]"><svg width="16" height="16" fill="none" stroke="#fff"><path d="M.5 1.500h15v11.500H10.500L8 15.500 5.500 13H.5z" /></svg></button>
        <span className="mr-1 ml-5 h-10 w-px bg-[#5d6063]" />
      </div>
    </footer>
  );
}

export default function App() {
  return (
    <div className="flex h-screen flex-col overflow-hidden bg-white font-['Noto_Sans',sans-serif]">
      <header className="shrink-0"><TabStrip /><Toolbar /><Bookmarks /></header>
      <div className="flex min-h-0 flex-1 font-['DejaVu_Sans',sans-serif] text-[#3b434e]">
        <div className="relative min-w-0 flex-1 overflow-hidden">
          <SiteNav />
          <Page />
          <Overlays />
        </div>
        <Scrollbar />
      </div>
      <Taskbar />
    </div>
  );
}
